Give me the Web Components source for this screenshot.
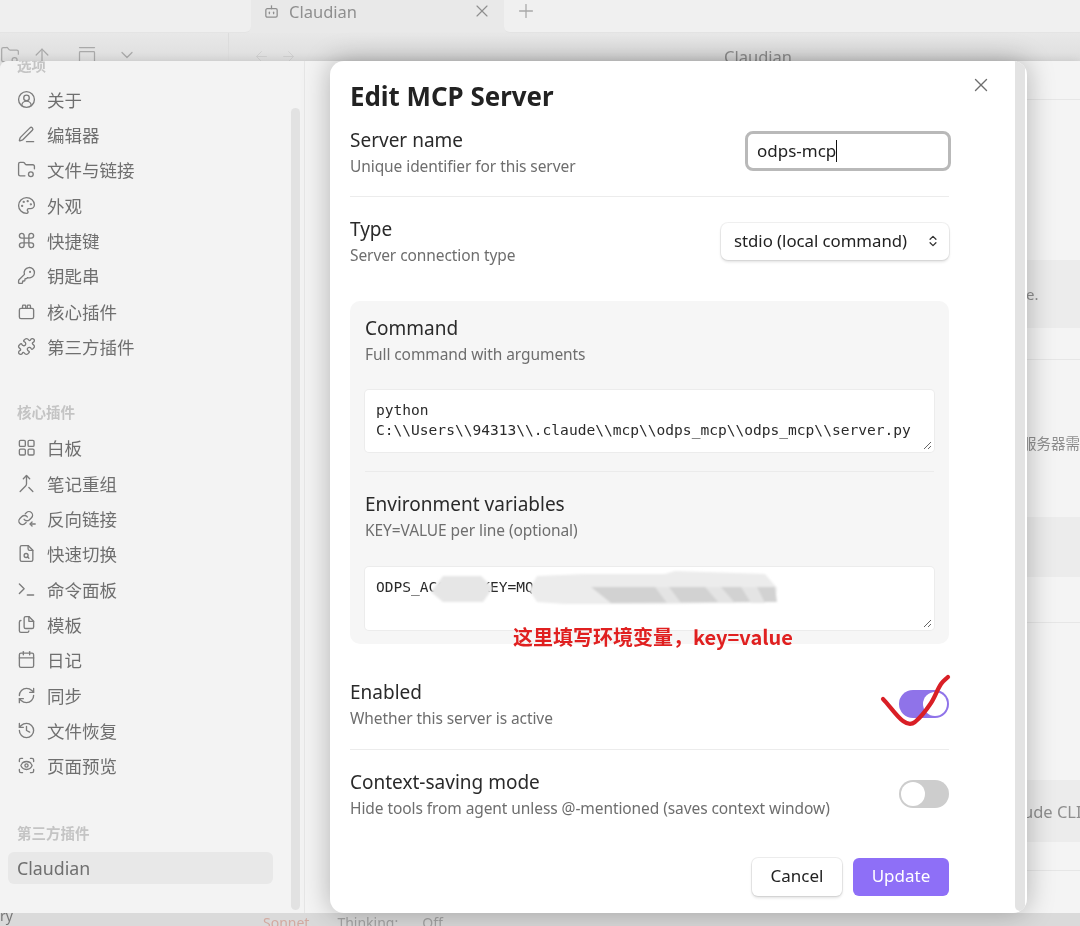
<!DOCTYPE html>
<html lang="zh">
<head>
<meta charset="utf-8">
<title>Edit MCP Server</title>
<style>
	html, body
	{
		margin: 0;
		padding: 0;
		width: 1080px;
		height: 926px;
		overflow: hidden;
		background: #e4e4e4;
		font-family: "Noto Sans", "Noto Sans CJK SC", sans-serif;
	}
</style>
</head>
<body>

<app-window>
	<nav-sidebar slot="sidebar">
		<nav-group first title="选项">
			<nav-item icon="user">关于</nav-item>
			<nav-item icon="pen">编辑器</nav-item>
			<nav-item icon="folder">文件与链接</nav-item>
			<nav-item icon="palette">外观</nav-item>
			<nav-item icon="command">快捷键</nav-item>
			<nav-item icon="key">钥匙串</nav-item>
			<nav-item icon="box">核心插件</nav-item>
			<nav-item icon="puzzle">第三方插件</nav-item>
		</nav-group>
		<nav-group title="核心插件">
			<nav-item icon="dashboard">白板</nav-item>
			<nav-item icon="merge">笔记重组</nav-item>
			<nav-item icon="backlink">反向链接</nav-item>
			<nav-item icon="filesearch">快速切换</nav-item>
			<nav-item icon="terminal">命令面板</nav-item>
			<nav-item icon="files">模板</nav-item>
			<nav-item icon="calendar">日记</nav-item>
			<nav-item icon="sync">同步</nav-item>
			<nav-item icon="history">文件恢复</nav-item>
			<nav-item icon="scaneye">页面预览</nav-item>
		</nav-group>
		<nav-group title="第三方插件" style="--top: 39.5px; --below: 9.5px">
			<nav-item active>Claudian</nav-item>
		</nav-group>
	</nav-sidebar>

	<edit-modal slot="modal" heading="Edit MCP Server">
		<setting-row style="--pad: 11px 0 17px" divider>
			<span slot="label">Server name</span>
			<span slot="desc">Unique identifier for this server</span>
			<text-field slot="control" value="odps-mcp"></text-field>
		</setting-row>
		<setting-row style="--pad: 19px 0 33px">
			<span slot="label">Type</span>
			<span slot="desc">Server connection type</span>
			<select-box slot="control">stdio (local command)</select-box>
		</setting-row>
		<grey-panel>
			<setting-row style="--pad: 0 0 23px">
				<span slot="label">Command</span>
				<span slot="desc">Full command with arguments</span>
			</setting-row>
			<code-area h="62">python
C:\\Users\\94313\\.claude\\mcp\\odps_mcp\\odps_mcp\\server.py</code-area>
			<panel-rule></panel-rule>
			<setting-row style="--pad: 0 0 24px">
				<span slot="label">Environment variables</span>
				<span slot="desc">KEY=VALUE per line (optional)</span>
			</setting-row>
			<code-area h="63" smudge>ODPS_ACCESS_KEY=MQ</code-area>
		</grey-panel>
		<setting-row style="--pad: 35px 0 18px" divider>
			<span slot="label">Enabled</span>
			<span slot="desc">Whether this server is active</span>
			<toggle-switch slot="control" on></toggle-switch>
		</setting-row>
		<setting-row style="--pad: 19px 0 37px">
			<span slot="label">Context-saving mode</span>
			<span slot="desc">Hide tools from agent unless @-mentioned (saves context window)</span>
			<toggle-switch slot="control"></toggle-switch>
		</setting-row>
		<modal-actions></modal-actions>
	</edit-modal>
</app-window>

<script>
const ICONS = {
	user: '<circle cx="12" cy="12" r="10"/><circle cx="12" cy="10" r="3.5"/><path d="M18 20a6 6 0 0 0-12 0"/>',
	pen: '<path d="M12 21h9"/><path d="M16.376 3.622a1 1 0 0 1 3.002 3.002L7.368 18.635a2 2 0 0 1-.855.506l-2.872.838a.5.5 0 0 1-.62-.62l.838-2.872a2 2 0 0 1 .506-.854z"/>',
	folder: '<path d="M10 20H4a2 2 0 0 1-2-2V5a2 2 0 0 1 2-2h3.9a2 2 0 0 1 1.69.9l.81 1.2a2 2 0 0 0 1.67.9H20a2 2 0 0 1 2 2v3"/><circle cx="17.5" cy="18" r="3"/>',
	palette: '<circle cx="13.5" cy="6.5" r=".6"/><circle cx="17.5" cy="10.5" r=".6"/><circle cx="8.5" cy="7.5" r=".6"/><circle cx="6.5" cy="12.5" r=".6"/><path d="M12 22a1 1 0 0 1 0-20 10 9 0 0 1 10 9 5 5 0 0 1-5 5h-2.25a1.75 1.75 0 0 0-1.4 2.8l.3.4a1.75 1.75 0 0 1-1.4 2.8z"/>',
	command: '<path d="M15 6v12a3 3 0 1 0 3-3H6a3 3 0 1 0 3 3V6a3 3 0 1 0-3 3h12a3 3 0 1 0-3-3"/>',
	key: '<path d="M2.586 17.414A2 2 0 0 0 2 18.828V21a1 1 0 0 0 1 1h3a1 1 0 0 0 1-1v-1a1 1 0 0 1 1-1h1a1 1 0 0 0 1-1v-1a1 1 0 0 1 1-1h.172a2 2 0 0 0 1.414-.586l.814-.814a6.5 6.5 0 1 0-4-4z"/><circle cx="16.5" cy="7.5" r=".5"/>',
	box: '<rect x="3" y="8" width="18" height="13" rx="2"/><path d="M7 8V5a1 1 0 0 1 1-1h2a1 1 0 0 1 1 1v3"/><path d="M13 8V5a1 1 0 0 1 1-1h2a1 1 0 0 1 1 1v3"/>',
	puzzle: '<path d="M19.439 7.85c-.049.322.059.648.289.878l1.568 1.568c.47.47.706 1.087.706 1.704s-.235 1.233-.706 1.704l-1.611 1.611a.98.98 0 0 1-.837.276c-.47-.07-.802-.48-.968-.925a2.501 2.501 0 1 0-3.214 3.214c.446.166.855.497.925.968a.979.979 0 0 1-.276.837l-1.61 1.61a2.404 2.404 0 0 1-1.705.707 2.402 2.402 0 0 1-1.704-.706l-1.568-1.568a1.026 1.026 0 0 0-.877-.29c-.493.074-.84.504-1.02.968a2.5 2.5 0 1 1-3.237-3.237c.464-.18.894-.527.967-1.02a1.026 1.026 0 0 0-.289-.877l-1.568-1.568A2.402 2.402 0 0 1 1.998 12c0-.617.236-1.234.706-1.704L4.23 8.77c.24-.24.581-.353.917-.303.515.077.877.528 1.073 1.01a2.5 2.5 0 1 0 3.259-3.259c-.482-.196-.933-.558-1.01-1.073-.05-.336.062-.676.303-.917l1.525-1.525A2.402 2.402 0 0 1 12 1.998c.617 0 1.234.236 1.704.706l1.568 1.568c.23.23.556.338.877.29.493-.074.84-.504 1.02-.968a2.5 2.5 0 1 1 3.237 3.237c-.464.18-.894.527-.967 1.02Z"/>',
	dashboard: '<rect x="3" y="3" width="7.5" height="7.5" rx="1.5"/><rect x="14" y="3" width="7.5" height="7.5" rx="1.5"/><rect x="3" y="14" width="7.5" height="7.5" rx="1.5"/><rect x="14" y="14" width="7.5" height="7.5" rx="1.5"/>',
	merge: '<path d="m8 6 4-4 4 4"/><path d="M12 2v10.3a4 4 0 0 1-1.172 2.872L4 22"/><path d="m20 22-5-5"/>',
	backlink: '<path d="M9 13a4.5 4.5 0 0 0 6.8.5l2.5-2.5a4.5 4.5 0 0 0-6.4-6.4l-1.4 1.4"/><path d="M13 10a4.5 4.5 0 0 0-6.8-.5l-2.5 2.5a4.5 4.5 0 0 0 6.4 6.4l1.4-1.4"/><path d="M23 19h-6"/><path d="m19 16.5-2.5 2.5 2.5 2.5"/>',
	filesearch: '<path d="M14 2H6a2 2 0 0 0-2 2v16a2 2 0 0 0 2 2h12a2 2 0 0 0 2-2V8z"/><path d="M14 2v4a2 2 0 0 0 2 2h4"/><circle cx="11.5" cy="14.5" r="2.5"/><path d="M13.3 16.3 15 18"/>',
	terminal: '<path d="m3 17 6-6-6-6"/><path d="M13 19h8"/>',
	files: '<path d="M15 2h-4a2 2 0 0 0-2 2v11a2 2 0 0 0 2 2h8a2 2 0 0 0 2-2V8z"/><path d="M15 2v6h6"/><path d="M5 7a2 2 0 0 0-2 2v11a2 2 0 0 0 2 2h8a2 2 0 0 0 2-2"/>',
	calendar: '<path d="M8 2v4"/><path d="M16 2v4"/><rect x="3" y="4" width="18" height="18" rx="2"/><path d="M3 10h18"/>',
	sync: '<path d="M3 12a9 9 0 0 1 9-9 9.75 9.75 0 0 1 6.74 2.74L21 8"/><path d="M21 3v5h-5"/><path d="M21 12a9 9 0 0 1-9 9 9.75 9.75 0 0 1-6.74-2.74L3 16"/><path d="M8 16H3v5"/>',
	history: '<path d="M3 12a9 9 0 1 0 9-9 9.75 9.75 0 0 0-6.74 2.74L3 8"/><path d="M3 3v5h5"/><path d="M12 7v5l4 2"/>',
	scaneye: '<path d="M3 7V5a2 2 0 0 1 2-2h2"/><path d="M17 3h2a2 2 0 0 1 2 2v2"/><path d="M21 17v2a2 2 0 0 1-2 2h-2"/><path d="M7 21H5a2 2 0 0 1-2-2v-2"/><circle cx="12" cy="12" r="2"/><path d="M18.944 12.33a1 1 0 0 0 0-.66 7.5 7.5 0 0 0-13.888 0 1 1 0 0 0 0 .66 7.5 7.5 0 0 0 13.888 0"/>',
	bot: '<path d="M12 8V4"/><rect x="4" y="8" width="16" height="12" rx="2"/><path d="M9 13v2"/><path d="M15 13v2"/>',
	close: '<path d="M18 6 6 18"/><path d="m6 6 12 12"/>',
	plus: '<path d="M5 12h14"/><path d="M12 5v14"/>',
	up: '<path d="m5 12 7-7 7 7"/><path d="M12 19V5"/>',
	left: '<path d="m12 19-7-7 7-7"/><path d="M19 12H5"/>',
	right: '<path d="M5 12h14"/><path d="m12 5 7 7-7 7"/>',
	chevron: '<path d="m6 9 6 6 6-6"/>',
	layout: '<path d="M3 3h18"/><rect x="3" y="8" width="18" height="13" rx="1"/>',
	updown: '<path d="m7 15 5 5 5-5"/><path d="m7 9 5-5 5 5"/>'
};

class UiIcon extends HTMLElement
{
	connectedCallback()
	{
		const size = this.getAttribute("size") || 20;
		const stroke = this.getAttribute("stroke") || 1.8;

		this.attachShadow({ mode: "open" });
		this.shadowRoot.innerHTML = `
			<style>
				:host { display: inline-flex; width: ${size}px; height: ${size}px; flex: none; }
				svg { width: 100%; height: 100%; fill: none; stroke: currentColor; stroke-width: ${stroke}; stroke-linecap: round; stroke-linejoin: round; }
			</style>
			<svg viewBox="0 0 24 24">${ICONS[this.getAttribute("name")]}</svg>`;
	}
}
customElements.define("ui-icon", UiIcon);

const windowTemplate = document.createElement("template");
windowTemplate.innerHTML = `
	<style>
		:host
		{
			display: flex;
			flex-direction: column;
			position: relative;
			width: 1080px;
			height: 926px;
			overflow: hidden;
			background: #e3e3e3;
			color: #8a8a8a;
			filter: blur(.3px);
		}

		.tabs
		{
			display: flex;
			height: 33px;
			flex: none;
			background: #e9e9e9;
		}

		.tabs-left
		{
			width: 251px;
			background: #efefef;
			border-bottom: 1px solid #e4e4e4;
			border-bottom-right-radius: 6px;
			box-sizing: border-box;
		}

		.tab
		{
			width: 253px;
			display: flex;
			align-items: center;
			gap: 9px;
			padding: 0 12px 11px 12px;
			box-sizing: border-box;
			height: 33px;
			font-size: 16.5px;
			color: #8f8f8f;
		}

		.tab .grow { flex: 1; }

		.tabs-right
		{
			flex: 1;
			background: #f0f0f0;
			border-bottom-left-radius: 6px;
			border-bottom: 1px solid #e4e4e4;
			padding: 0 0 0 11px;
			color: #a8a8a8;
		}

		.nav
		{
			display: flex;
			align-items: flex-start;
			height: 28px;
			flex: none;
			background: linear-gradient(#e8e8e8, #dedede);
			color: #bcbcbc;
		}

		.nav-left
		{
			width: 229px;
			display: flex;
			gap: 12px;
			padding: 12px 0 0 0;
			box-sizing: border-box;
			color: #a9a9a9;
			border-right: 1px solid #dcdcdc;
			height: 100%;
		}

		.nav-right
		{
			flex: 1;
			display: flex;
			gap: 10px;
			padding: 15px 0 0 24px;
			color: #cfcfcf;
			position: relative;
		}

		.nav-title
		{
			margin-left: 417px;
			margin-top: -2px;
			color: #8f8f8f;
			font-size: 16.5px;
			line-height: 22px;
			white-space: nowrap;
		}

		.settings
		{
			position: absolute;
			left: 0;
			top: 61px;
			width: 1080px;
			height: 852px;
			display: flex;
			background: #f3f3f3;
			border-top-left-radius: 8px;
			box-shadow: 0 0 10px rgba(0, 0, 0, .12);
			overflow: hidden;
		}

		.status
		{
			position: absolute;
			left: 0;
			right: 0;
			bottom: 0;
			height: 13px;
			background: #dadada;
			overflow: hidden;
			font-size: 14px;
			line-height: 20px;
			color: #a3a3a3;
			display: flex;
			gap: 24px;
			padding-left: 263px;
		}

		.status .tail
		{
			position: absolute;
			left: 0;
			top: -7px;
			color: #777;
		}

		.status .sonnet { color: #d2a9a0; margin-right: 4px; }

		.pane
		{
			flex: 1;
			position: relative;
			display: flex;
			flex-direction: column;
			background: #f4f4f4;
			color: #8e8e8e;
			font-size: 15px;
		}

		.pane > div { margin-left: 25px; }
		.pane-head { height: 38px; flex: none; border-bottom: 1px solid #e6e6e6; }
		.gap { flex: none; }
		.band { background: #ececec; flex: none; display: flex; align-items: center; padding-left: 696px; white-space: nowrap; }
		.rule { border-bottom: 1px solid #e6e6e6; flex: none; }
		.line { flex: none; padding-left: 692px; white-space: nowrap; font-size: 14.5px; }

		::slotted([slot="modal"])
		{
			position: absolute;
			left: 330px;
			top: 61px;
		}
	</style>

	<div class="tabs">
		<div class="tabs-left"></div>
		<div class="tab">
			<ui-icon name="bot" size="17"></ui-icon>
			<span>Claudian</span>
			<span class="grow"></span>
			<ui-icon name="close" size="20" stroke="1.4"></ui-icon>
		</div>
		<div class="tabs-right"><ui-icon name="plus" size="22" stroke="1.4"></ui-icon></div>
	</div>

	<div class="nav">
		<div class="nav-left">
			<ui-icon name="folder" size="20" stroke="1.5"></ui-icon>
			<ui-icon name="up" size="20" stroke="1.5"></ui-icon>
			<ui-icon name="layout" size="20" stroke="1.5" style="margin-left:13px"></ui-icon>
			<ui-icon name="chevron" size="20" stroke="1.5" style="margin-left:8px"></ui-icon>
		</div>
		<div class="nav-right">
			<ui-icon name="left" size="17" stroke="1.4"></ui-icon>
			<ui-icon name="right" size="17" stroke="1.4"></ui-icon>
			<div class="nav-title">Claudian</div>
		</div>
	</div>

	<div class="settings">
		<slot name="sidebar"></slot>
		<div class="pane">
			<div class="pane-head"></div>
			<div class="gap" style="height:160px"></div>
			<div class="band" style="height:68px">e.</div>
			<div class="rule" style="height:31px"></div>
			<div class="line" style="height:157px;padding-top:72px;box-sizing:border-box">服务器需</div>
			<div class="band" style="height:60px"></div>
			<div class="rule" style="height:45px"></div>
			<div class="gap" style="height:157px"></div>
			<div class="band" style="height:62px;padding-left:669px;font-size:16.5px">Claude CLI</div>
			<div class="rule" style="height:28px"></div>
		</div>
	</div>

	<div class="status">
		<span class="tail">ry</span>
		<span class="sonnet">Sonnet</span>
		<span>Thinking:</span>
		<span>Off</span>
	</div>

	<slot name="modal"></slot>
`;

class AppWindow extends HTMLElement
{
	constructor()
	{
		super();

		this.attachShadow({ mode: "open" });
		this.shadowRoot.appendChild(windowTemplate.content.cloneNode(true));
	}
}
customElements.define("app-window", AppWindow);

class NavSidebar extends HTMLElement
{
	constructor()
	{
		super();

		this.attachShadow({ mode: "open" });
		this.shadowRoot.innerHTML = `
			<style>
				:host
				{
					display: block;
					position: relative;
					width: 305px;
					height: 852px;
					flex: none;
					box-sizing: border-box;
					border-right: 1px solid #e6e6e6;
					padding-right: 31px;
					background: #f3f3f3;
				}

				.thumb
				{
					position: absolute;
					right: 4px;
					top: 47px;
					bottom: 3px;
					width: 9px;
					border-radius: 5px;
					background: #e2e2e2;
				}
			</style>
			<slot></slot>
			<div class="thumb"></div>`;
	}
}
customElements.define("nav-sidebar", NavSidebar);

class NavGroup extends HTMLElement
{
	connectedCallback()
	{
		const first = this.hasAttribute("first");

		this.attachShadow({ mode: "open" });
		this.shadowRoot.innerHTML = `
			<style>
				:host { display: block; }

				.title
				{
					height: 20px;
					line-height: 20px;
					margin: ${first ? "-6px 0 6.6px 17px" : "var(--top, 38px) 0 var(--below, 8.35px) 17px"};
					font-size: 14.5px;
					font-weight: 700;
					color: #c4c4c4;
				}
			</style>
			<div class="title">${this.getAttribute("title")}</div>
			<slot></slot>`;
		this.removeAttribute("title");
	}
}
customElements.define("nav-group", NavGroup);

class NavItem extends HTMLElement
{
	connectedCallback()
	{
		const icon = this.getAttribute("icon");
		const active = this.hasAttribute("active");

		this.attachShadow({ mode: "open" });
		this.shadowRoot.innerHTML = `
			<style>
				:host
				{
					display: flex;
					align-items: center;
					gap: 11px;
					height: 35.3px;
					padding-left: 17px;
					font-size: 17.5px;
					color: #6f6f6f;
				}

				:host([active])
				{
					height: 32px;
					margin: 0 0 0 8px;
					padding-left: 9px;
					border-radius: 6px;
					background: #e8e8e8;
					font-size: 17.8px;
				}

				ui-icon { color: #7c7c7c; }
			</style>
			${active ? "" : `<ui-icon name="${icon}" size="19" stroke="1.7"></ui-icon>`}
			<slot></slot>`;
	}
}
customElements.define("nav-item", NavItem);

const modalTemplate = document.createElement("template");
modalTemplate.innerHTML = `
	<style>
		:host
		{
			display: block;
			width: 697px;
			height: 852px;
			background: #fff;
			border-radius: 14px;
			box-shadow: 0 0 28px rgba(0, 0, 0, .28);
			overflow: hidden;
			color: #222;
		}

		.body
		{
			position: relative;
			height: 100%;
			box-sizing: border-box;
			padding: 16px 0 0 20px;
			width: 619px;
		}

		h2
		{
			margin: 0 0 1px;
			font-size: 25.9px;
			line-height: 38px;
			font-weight: 700;
			color: #222;
		}

		.bar
		{
			position: absolute;
			right: 2px;
			top: 0;
			bottom: 2px;
			width: 10px;
			border-radius: 0 0 5px 5px;
			background: #e3e3e3;
		}

		.close
		{
			position: absolute;
			left: 640px;
			top: 13px;
			color: #6e6e6e;
		}

		.note
		{
			position: absolute;
			left: 183px;
			top: 562px;
			font-family: "Noto Sans CJK SC", sans-serif;
			font-size: 20px;
			line-height: 28px;
			font-weight: 700;
			color: #e02020;
			white-space: nowrap;
		}

		.tick
		{
			position: absolute;
			left: 545px;
			top: 610px;
			width: 80px;
			height: 60px;
			overflow: visible;
		}
	</style>
	<div class="body">
		<h2></h2>
		<slot></slot>
	</div>
	<div class="bar"></div>
	<ui-icon class="close" name="close" size="22" stroke="1.5"></ui-icon>
	<div class="note">这里填写环境变量，key=value</div>
	<svg class="tick" viewBox="0 0 80 60">
		<path d="M8 28 C14 34 22 46 28 50 C32 53 36 54 40 51 C46 46 52 38 56 32 C60 26 62 19 66 13 C68 10 71 8 73 6" fill="none" stroke="#d91f26" stroke-width="4.2" stroke-linecap="round" stroke-linejoin="round"/>
	</svg>
`;

class EditModal extends HTMLElement
{
	constructor()
	{
		super();

		this.attachShadow({ mode: "open" });
		this.shadowRoot.appendChild(modalTemplate.content.cloneNode(true));
	}

	connectedCallback()
	{
		this.shadowRoot.querySelector("h2").textContent = this.getAttribute("heading");
	}
}
customElements.define("edit-modal", EditModal);

const rowTemplate = document.createElement("template");
rowTemplate.innerHTML = `
	<style>
		:host
		{
			display: flex;
			justify-content: space-between;
			align-items: center;
			padding: var(--pad, 20px 0);
		}

		:host([divider]) { border-bottom: 1px solid #ececec; }

		.label
		{
			font-size: 19px;
			line-height: 26px;
			color: #2a2a2a;
		}

		.desc
		{
			font-size: 15.5px;
			line-height: 26px;
			letter-spacing: -.08px;
			color: #6e6e6e;
		}
	</style>
	<div>
		<div class="label"><slot name="label"></slot></div>
		<div class="desc"><slot name="desc"></slot></div>
	</div>
	<slot name="control"></slot>
`;

class SettingRow extends HTMLElement
{
	constructor()
	{
		super();

		this.attachShadow({ mode: "open" });
		this.shadowRoot.appendChild(rowTemplate.content.cloneNode(true));
	}
}
customElements.define("setting-row", SettingRow);

class TextField extends HTMLElement
{
	connectedCallback()
	{
		this.attachShadow({ mode: "open" });
		this.shadowRoot.innerHTML = `
			<style>
				:host
				{
					display: flex;
					align-items: center;
					width: 206px;
					height: 40px;
					box-sizing: border-box;
					margin: -4px -2px 0 0;
					padding-left: 9px;
					border: 3px solid #b9b9b9;
					border-radius: 8px;
					font-size: 17px;
					color: #222;
				}

				.caret { border-right: 1px solid #111; height: 22px; line-height: 22px; }
			</style>
			<span class="caret">${this.getAttribute("value")}</span>`;
	}
}
customElements.define("text-field", TextField);

class SelectBox extends HTMLElement
{
	constructor()
	{
		super();

		this.attachShadow({ mode: "open" });
		this.shadowRoot.innerHTML = `
			<style>
				:host
				{
					display: flex;
					align-items: center;
					justify-content: space-between;
					width: 228px;
					height: 37px;
					box-sizing: border-box;
					margin-top: -2px;
					padding: 0 9px 1px 13px;
					border-radius: 7px;
					background: #fff;
					box-shadow: 0 0 0 1px rgba(0, 0, 0, .06), 0 2px 3px rgba(0, 0, 0, .12);
					font-size: 16.8px;
					letter-spacing: -.03px;
					color: #222;
					white-space: nowrap;
				}

				ui-icon { color: #333; }
			</style>
			<slot></slot>
			<ui-icon name="updown" size="14" stroke="2.2"></ui-icon>`;
	}
}
customElements.define("select-box", SelectBox);

class GreyPanel extends HTMLElement
{
	constructor()
	{
		super();

		this.attachShadow({ mode: "open" });
		this.shadowRoot.innerHTML = `
			<style>
				:host
				{
					display: block;
					box-sizing: border-box;
					height: 343px;
					padding: 14px 15px 15px;
					border-radius: 10px;
					background: #f6f6f6;
				}
			</style>
			<slot></slot>`;
	}
}
customElements.define("grey-panel", GreyPanel);

class PanelRule extends HTMLElement
{
	constructor()
	{
		super();

		this.attachShadow({ mode: "open" });
		this.shadowRoot.innerHTML = `
			<style>
				:host { display: block; height: 1px; margin: 19px 0 19px; background: #ebebeb; }
			</style>`;
	}
}
customElements.define("panel-rule", PanelRule);

class CodeArea extends HTMLElement
{
	connectedCallback()
	{
		const smudge = this.hasAttribute("smudge") ? `
			<svg class="smudge" width="430" height="50" viewBox="0 0 430 50">
				<defs>
					<filter id="soft"><feGaussianBlur stdDeviation="1"></feGaussianBlur></filter>
				</defs>
				<g filter="url(#soft)">
					<path d="M78 8 L116 8 L128 20 L118 34 L78 34 L66 24 Z" fill="#e6e6e6"></path>
					<path d="M172 8 L220 6 L300 6 L310 3 L400 6 L412 20 L410 34 L290 36 L200 36 L172 34 L164 22 Z" fill="#ececec"></path>
					<path d="M226 19 L410 19 L412 34 L246 35 Z" fill="#d2d2d2"></path>
					<path d="M290 19 L304 19 L316 35 L302 35 Z M340 19 L356 19 L370 35 L354 35 Z M376 19 L392 19 L400 35 L386 35 Z" fill="#e4e4e4"></path>
				</g>
			</svg>` : "";

		this.attachShadow({ mode: "open" });
		this.shadowRoot.innerHTML = `
			<style>
				:host
				{
					display: block;
					position: relative;
					box-sizing: border-box;
					height: ${this.getAttribute("h")}px;
					padding: 10px 11px;
					border-radius: 4px;
					background: #fff;
					box-shadow: 0 0 0 1px #ececec;
					font-family: "DejaVu Sans Mono", monospace;
					font-size: 14.57px;
					line-height: 20px;
					color: #2a2a2a;
				}

				.text { white-space: pre; }

				.grip
				{
					position: absolute;
					right: 2px;
					bottom: 2px;
					width: 9px;
					height: 9px;
				}

				.smudge { position: absolute; left: 0; top: 1px; }
			</style>
			<div class="text"><slot></slot></div>
			${smudge}
			<svg class="grip" viewBox="0 0 9 9">
				<path d="M1 8 8 1M5 8l3-3" stroke="#666" stroke-width="1" fill="none"></path>
			</svg>`;
	}
}
customElements.define("code-area", CodeArea);

class ToggleSwitch extends HTMLElement
{
	connectedCallback()
	{
		this.attachShadow({ mode: "open" });
		this.shadowRoot.innerHTML = `
			<style>
				:host
				{
					display: flex;
					width: 50px;
					height: 28px;
					box-sizing: border-box;
					margin-top: -2px;
					padding: 2px;
					border-radius: 14px;
					background: #cdcdcd;
				}

				:host([on]) { background: #8f73e9; justify-content: flex-end; }

				.knob { width: 24px; height: 24px; border-radius: 50%; background: #fff; }
			</style>
			<div class="knob"></div>`;
	}
}
customElements.define("toggle-switch", ToggleSwitch);

class ModalActions extends HTMLElement
{
	constructor()
	{
		super();

		this.attachShadow({ mode: "open" });
		this.shadowRoot.innerHTML = `
			<style>
				:host { display: flex; justify-content: flex-end; gap: 11px; }

				button
				{
					height: 38px;
					border: 0;
					border-radius: 6px;
					font: inherit;
					font-size: 17px;
					padding: 0 0 4px;
				}

				.cancel
				{
					width: 90px;
					background: #fff;
					color: #222;
					box-shadow: 0 0 0 1px rgba(0, 0, 0, .07), 0 2px 3px rgba(0, 0, 0, .12);
				}

				.update { width: 96px; background: #8e6ff7; color: #fff; }
			</style>
			<button class="cancel">Cancel</button>
			<button class="update">Update</button>`;
	}
}
customElements.define("modal-actions", ModalActions);
</script>
</body>
</html>
